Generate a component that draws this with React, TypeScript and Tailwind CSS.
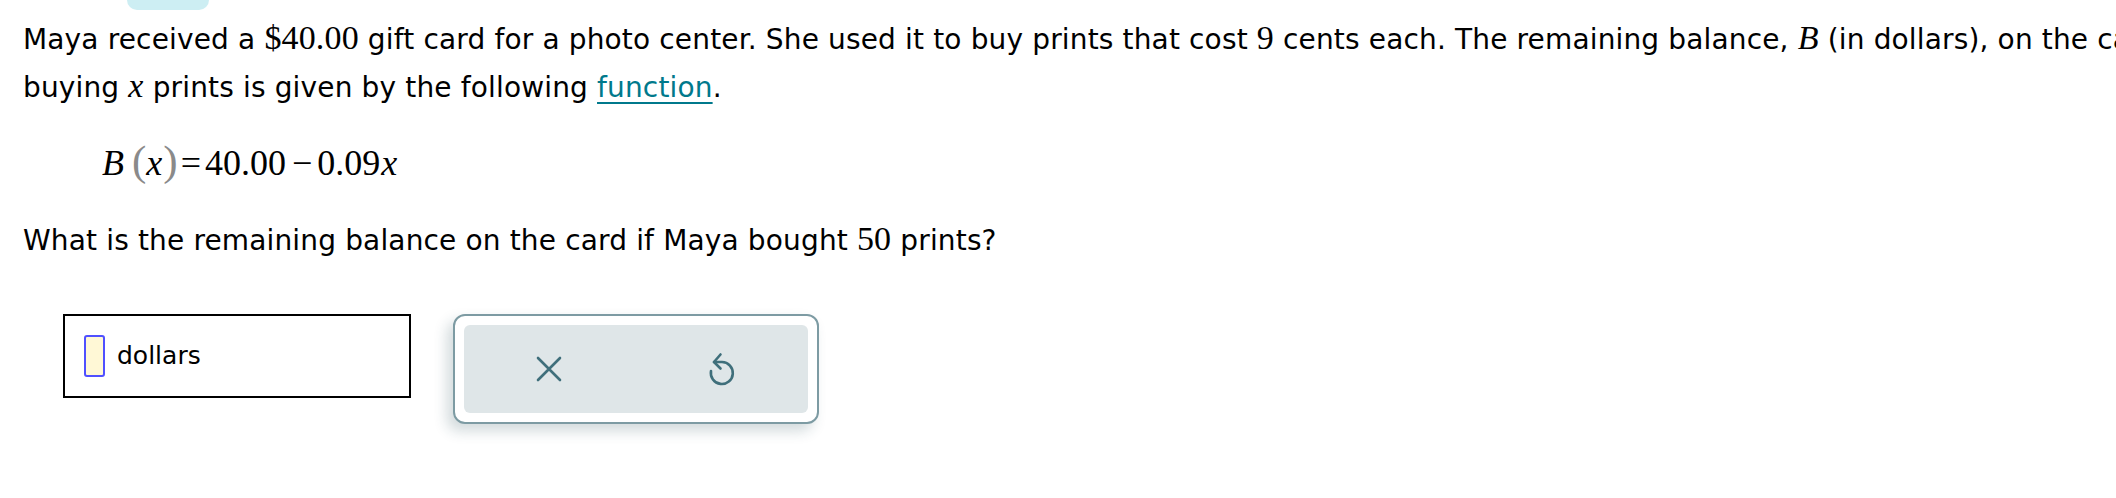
function CloseIcon() {
  return (
    <svg width="26" height="26" viewBox="0 0 26 26" fill="none" stroke="#3f6f7b" strokeWidth="2.6" strokeLinecap="round">
      <path d="M2 2 L24 24 M24 2 L2 24" />
    </svg>
  );
}

function UndoIcon() {
  return (
    <svg width="32" height="40" viewBox="0 0 32 40" fill="none" stroke="#3f6f7b" strokeWidth="2.6" strokeLinecap="round" strokeLinejoin="round">
      <path d="M9 13 L17 13 A11 11 0 1 1 6 22" />
      <path d="M15.5 5.5 L9 13 L15.5 19.5" />
    </svg>
  );
}

const serif = "font-['Liberation_Serif',_serif] text-[34px]";

export default function App() {
  return (
    <div className="w-[2116px] h-[498px] overflow-hidden bg-white text-black font-['DejaVu_Sans',_Verdana,_sans-serif]">
      <div className="ml-[127px] w-[82px] h-[10px] rounded-b-[12px] bg-[#cdeef3]" />

      <div className="pl-[23px] pt-[5px] text-[28px] tracking-[0.15px] leading-[46px] whitespace-nowrap">
        <p>
          Maya received a <span className={serif}>$40.00</span> gift card for a photo center. She used
          it to buy prints that cost <span className={serif}>9</span> cents each. The remaining
          balance, <span className={serif + " italic"}>B</span> (in dollars), on the card after
        </p>
        <p>
          buying <span className={serif + " italic"}>x</span> prints is given by the following{" "}
          <span className="text-[#00798c] underline underline-offset-[5px]">function</span>.
        </p>

        <div className="mt-[30px] ml-[79px] flex items-baseline font-['Liberation_Serif',_serif] text-[36px] leading-[40px] tracking-normal">
          <span className="italic">B</span>
          <span className="ml-[8px] text-[#8a8a8a] text-[43px]">(</span>
          <span className="italic">x</span>
          <span className="ml-[1px] text-[#8a8a8a] text-[43px]">)</span>
          <span className="ml-[3px]">=</span>
          <span className="ml-[4px]">40.00</span>
          <span className="ml-[6px]">−</span>
          <span className="ml-[5px]">0.09</span>
          <span className="ml-[1px] italic">x</span>
        </div>

        <p className="mt-[33px]">
          What is the remaining balance on the card if Maya bought <span className={serif}>50</span>{" "}
          prints?
        </p>
      </div>

      <div className="mt-[50px] ml-[63px] flex items-start gap-[42px]">
        <div className="w-[348px] h-[84px] border-2 border-black flex items-center pl-[19px] gap-[12px]">
          <div className="w-[21px] h-[42px] rounded-[3px] border-2 border-[#5050ff] bg-[#fff8d6]" />
          <span className="text-[25px] leading-none pb-[2px]">dollars</span>
        </div>

        <div className="w-[366px] h-[110px] rounded-[12px] border-2 border-[#7d9ba3] bg-white p-[9px] shadow-[-6px_7px_14px_rgba(30,70,80,0.2)]">
          <div className="h-full rounded-[6px] bg-[#dfe6e8] flex items-center justify-center gap-[143px]">
            <CloseIcon />
            <UndoIcon />
          </div>
        </div>
      </div>
    </div>
  );
}
